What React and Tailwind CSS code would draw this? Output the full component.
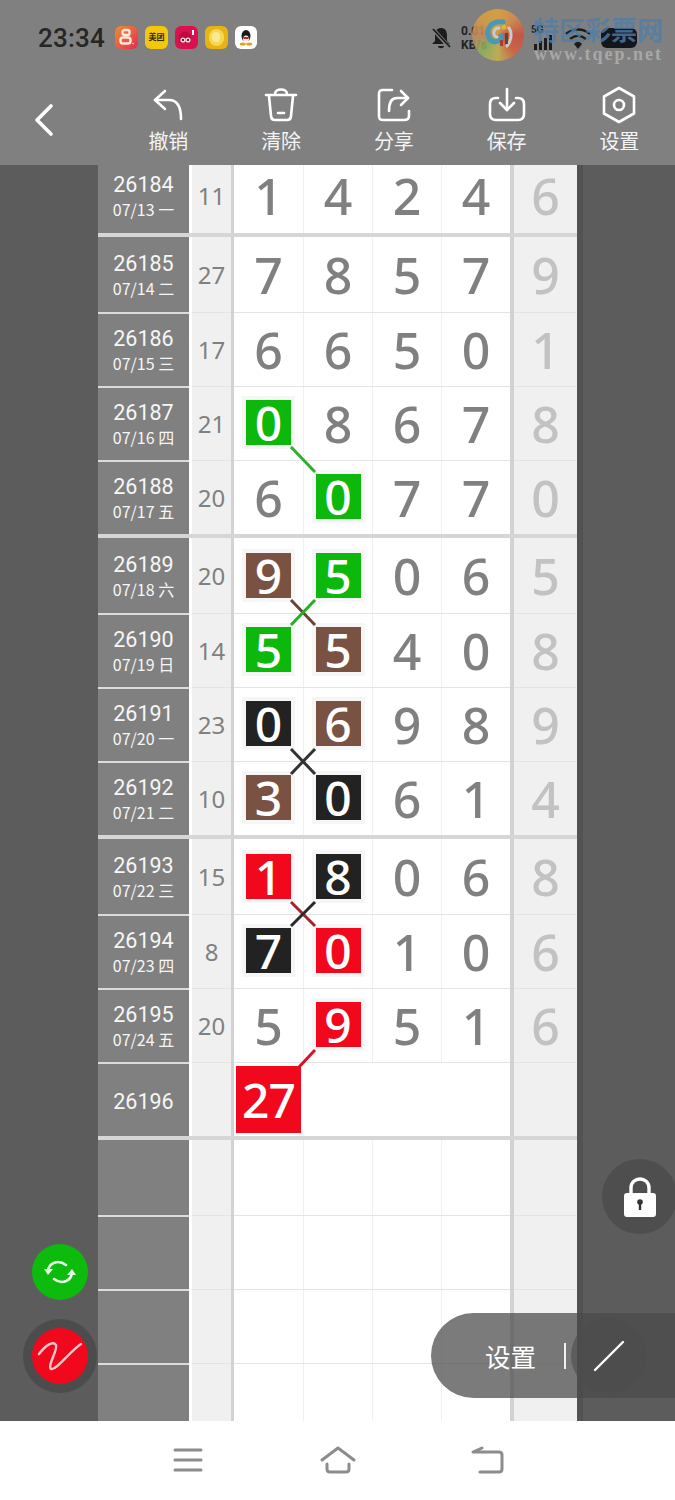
import React from 'react';

const FONT = "font-['Noto_Sans','Noto_Sans_CJK_SC',sans-serif]";

const GREEN = 'bg-[#0cb80c]';
const BROWN = 'bg-[#7a5244]';
const BLACK = 'bg-[#222222]';
const RED = 'bg-[#f2081c]';

const groups = [
  [{ id: '26184', date: '07/13 一', sum: '11', d: '1424', last: '6' }],
  [
    { id: '26185', date: '07/14 二', sum: '27', d: '7857', last: '9' },
    { id: '26186', date: '07/15 三', sum: '17', d: '6650', last: '1' },
    { id: '26187', date: '07/16 四', sum: '21', d: '0867', last: '8', marks: { 0: GREEN } },
    { id: '26188', date: '07/17 五', sum: '20', d: '6077', last: '0', marks: { 1: GREEN } },
  ],
  [
    { id: '26189', date: '07/18 六', sum: '20', d: '9506', last: '5', marks: { 0: BROWN, 1: GREEN } },
    { id: '26190', date: '07/19 日', sum: '14', d: '5540', last: '8', marks: { 0: GREEN, 1: BROWN } },
    { id: '26191', date: '07/20 一', sum: '23', d: '0698', last: '9', marks: { 0: BLACK, 1: BROWN } },
    { id: '26192', date: '07/21 二', sum: '10', d: '3061', last: '4', marks: { 0: BROWN, 1: BLACK } },
  ],
  [
    { id: '26193', date: '07/22 三', sum: '15', d: '1806', last: '8', marks: { 0: RED, 1: BLACK } },
    { id: '26194', date: '07/23 四', sum: '8', d: '7010', last: '6', marks: { 0: BLACK, 1: RED } },
    { id: '26195', date: '07/24 五', sum: '20', d: '5951', last: '6', marks: { 1: RED } },
    { id: '26196', big: '27' },
  ],
  [{}, {}, {}, {}],
];

const lines = [
  [291, 447, 315, 472, '#2fae2f'],
  [291, 600, 315, 625, '#6b4436'],
  [315, 600, 291, 625, '#22b022'],
  [291, 749, 315, 774, '#333333'],
  [315, 749, 291, 774, '#333333'],
  [291, 902, 315, 926, '#a8202c'],
  [315, 902, 291, 926, '#2a2a2a'],
  [315, 1050, 299, 1067, '#e01020'],
];

const ToolIcon = ({ children }) => (
  <svg width="38" height="38" viewBox="0 0 38 38" fill="none" stroke="white" strokeWidth="2.6" strokeLinecap="round" strokeLinejoin="round">
    {children}
  </svg>
);

const tools = [
  {
    label: '撤销',
    icon: (
      <ToolIcon>
        <path d="M16 5 L6 14 L16 23" />
        <path d="M6 14 H20 C28 14 32 21 32 33" />
      </ToolIcon>
    ),
  },
  {
    label: '清除',
    icon: (
      <ToolIcon>
        <path d="M4 9 H34" />
        <path d="M13 8 C13 2 25 2 25 8" />
        <path d="M7 10 L9 30 C9.3 33 11 34 13 34 H25 C27 34 28.7 33 29 30 L31 10" />
        <path d="M16 27 H22" />
      </ToolIcon>
    ),
  },
  {
    label: '分享',
    icon: (
      <ToolIcon>
        <path d="M17 4 H8 C5 4 4 5 4 8 V30 C4 33 5 34 8 34 H29 C32 34 34 33 34 30 V25" />
        <path d="M26 5 L33 12 L26 19" />
        <path d="M33 12 H22 C16 12 14 17 14 25" />
      </ToolIcon>
    ),
  },
  {
    label: '保存',
    icon: (
      <ToolIcon>
        <path d="M10 12 H8 C4 12 2 14 2 18 V28 C2 32 4 34 8 34 H30 C34 34 36 32 36 28 V18 C36 14 34 12 30 12 H28" />
        <path d="M19 3 V24" />
        <path d="M12 17 L19 24 L26 17" />
      </ToolIcon>
    ),
  },
  {
    label: '设置',
    icon: (
      <ToolIcon>
        <path d="M19 2 L34 10.5 V27.5 L19 36 L4 27.5 V10.5 Z" />
        <circle cx="19" cy="19" r="5" />
      </ToolIcon>
    ),
  },
];

const AppIcons = () => (
  <div className="flex items-center gap-[7px] ml-[10px] -mt-[1px]">
    <div className="w-[23px] h-[23px] rounded-[6px] bg-gradient-to-br from-[#ee8a30] to-[#e0204c] flex items-center justify-center">
      <svg width="15" height="18" viewBox="0 0 15 18" fill="none" stroke="#ffe9dc" strokeWidth="2.4">
        <rect x="3.5" y="2" width="7" height="5" rx="2" />
        <rect x="1.5" y="9.5" width="10" height="6" rx="2.5" />
        <circle cx="14" cy="15.5" r="0.8" fill="#ffe9dc" stroke="none" />
      </svg>
    </div>
    <div className="w-[23px] h-[23px] rounded-[6px] bg-[#f4c60c] flex items-center justify-center">
      <span className="text-[8px] leading-none font-bold text-[#2a2a10] font-['Noto_Sans_CJK_SC',sans-serif] whitespace-nowrap">美团</span>
    </div>
    <div className="w-[23px] h-[23px] rounded-[6px] bg-[#d9124f] flex items-center justify-center">
      <svg width="18" height="16" viewBox="0 0 18 16">
        <path d="M2 7 C4 1 12 1 14 7 V14 H2 Z" fill="#c00a40" />
        <circle cx="6" cy="11" r="2.6" fill="#f8d8e0" />
        <circle cx="11" cy="11" r="2.6" fill="#f8d8e0" />
        <circle cx="6" cy="11" r="1.1" fill="#400" />
        <circle cx="11" cy="11" r="1.1" fill="#400" />
        <rect x="15" y="1" width="2" height="5" fill="#fff" />
      </svg>
    </div>
    <div className="w-[23px] h-[23px] rounded-[6px] bg-[#e8b414] flex items-center justify-center">
      <div className="w-[15px] h-[17px] rounded-full bg-[#f6d84e] flex items-center justify-center">
        <div className="w-[8px] h-[10px] rounded-full bg-[#f8e89a]" />
      </div>
    </div>
    <div className="w-[22px] h-[23px] rounded-[6px] bg-white flex items-center justify-center">
      <svg width="14" height="17" viewBox="0 0 14 17">
        <ellipse cx="7" cy="7" rx="4.5" ry="6" fill="#1a1a1a" />
        <ellipse cx="7" cy="10" rx="3" ry="3.6" fill="#f4f4f4" />
        <path d="M3 8 H11 L9 10 H5 Z" fill="#d82020" />
        <ellipse cx="3.8" cy="15" rx="3" ry="1.5" fill="#e8a010" />
        <ellipse cx="10.2" cy="15" rx="3" ry="1.5" fill="#e8a010" />
      </svg>
    </div>
  </div>
);

const StatusBar = () => (
  <div className="relative flex items-center h-[75px] pl-[38px]">
    <span className="text-[26px] leading-none font-medium text-[#262626] font-['Roboto',sans-serif] tracking-[0.2px]">23:34</span>
    <AppIcons />
    {/* status icons under the site watermark */}
    <div className="absolute left-[430px] top-[24px] w-[210px] h-[28px] flex items-center">
      <svg width="22" height="24" viewBox="0 0 22 24" fill="#1c1c1c">
        <path d="M11 2 C6 2 5 6 5 10 V15 L2 18 H20 L17 15 V10 C17 6 16 2 11 2 Z" />
        <path d="M8 20 H14 C14 23 8 23 8 20 Z" />
        <path d="M2 2 L20 22" stroke="#808080" strokeWidth="4" />
        <path d="M3 3 L20 21" stroke="#1c1c1c" strokeWidth="1.8" />
      </svg>
      <div className="ml-[9px] flex flex-col text-[12px] leading-[14px] font-bold text-[#222222] font-['Roboto',sans-serif]">
        <span>0.01</span>
        <span>KB/s</span>
      </div>
      <span className="absolute left-[101px] top-[1px] text-[10px] leading-none font-bold text-[#222222] font-['Roboto',sans-serif]">5G</span>
      <svg className="absolute left-[102px] top-[2px]" width="112" height="26" viewBox="0 0 112 26" fill="#1c1c1c">
        <rect x="2" y="18" width="3" height="6" />
        <rect x="7" y="15" width="3" height="9" />
        <rect x="12" y="12" width="3" height="12" />
        <rect x="17" y="9" width="3" height="15" />
        <path d="M34 8 C41 2 51 2 58 8" fill="none" stroke="#1c1c1c" strokeWidth="2.4" />
        <path d="M38 13 C43 9 49 9 54 13" fill="none" stroke="#1c1c1c" strokeWidth="2.4" />
        <path d="M42 18 C45 15 47 15 50 18 L46 23 Z" />
        <rect x="69" y="2" width="36" height="20" rx="6" fill="#15151c" />
      </svg>
    </div>
    {/* site watermark */}
    <div className="absolute left-[472px] top-[9px] w-[52px] h-[52px] rounded-full opacity-85 bg-[conic-gradient(#e2a43c,#d98c4a,#cf4f3a,#d8603c,#c8b450,#8bb45c,#c98a5a,#d8a040,#e2a43c)] flex items-center justify-center">
      <svg width="38" height="38" viewBox="0 0 38 38" fill="none" strokeLinecap="round">
        <path d="M24 6 C12 4 6 14 10 22 C13 28 22 26 22 20" stroke="#3f9dc0" strokeWidth="5" />
        <path d="M20 12 C14 12 13 20 18 21" stroke="#d8d8d8" strokeWidth="3" />
        <path d="M28 30 C33 24 33 16 30 12" stroke="#d8d8d8" strokeWidth="3" />
        <rect x="26" y="17" width="3" height="11" fill="#444444" />
        <rect x="21" y="24" width="3" height="6" fill="#b03030" />
        <circle cx="25" cy="11" r="2.5" fill="#e8c030" />
      </svg>
    </div>
    <div className="absolute left-[533px] top-[14px] w-[140px] flex flex-col items-start pointer-events-none">
      <span className="text-[26px] leading-[30px] font-bold text-[#4f7ea8]/80 font-['Noto_Sans_CJK_SC',sans-serif] whitespace-nowrap">特区彩票网</span>
      <span className="text-[18px] leading-[20px] font-bold text-[#a8a8a8] font-['Liberation_Serif',serif] tracking-[2px] ml-[1px] whitespace-nowrap">www.tqep.net</span>
    </div>
  </div>
);

const Toolbar = () => (
  <div className="flex items-start h-[90px] relative">
    <svg className="ml-[32px] mt-[27px]" width="24" height="36" viewBox="0 0 24 36" fill="none" stroke="white" strokeWidth="3.6" strokeLinecap="round" strokeLinejoin="round">
      <path d="M19 4 L5 18 L19 32" />
    </svg>
    <div className="absolute left-[112px] top-[11px] flex">
      {tools.map((t) => (
        <div key={t.label} className="w-[112.75px] flex flex-col items-center">
          {t.icon}
          <span className="text-[20px] leading-[24px] mt-[5px] text-[#f4f4f4] font-['Noto_Sans_CJK_SC',sans-serif]">{t.label}</span>
        </div>
      ))}
    </div>
  </div>
);

const Digit = ({ value, mark, index, first }) => {
  const rule = index > 0 ? 'border-l border-[#f0f0f0]' : '';
  if (mark) {
    return (
      <div className={`h-full flex items-center justify-center ${rule}`}>
        <div className={`w-[45px] h-[45px] flex items-center justify-center text-[48px] leading-none font-medium text-white outline-[4px] outline-[#f6f6f6] ${mark} ${first ? '' : 'mb-[2px]'}`}>
          {value}
        </div>
      </div>
    );
  }
  return (
    <div className={`h-full flex items-center justify-center text-[50px] leading-none font-medium text-[#808080] ${rule}`}>
      {value}
    </div>
  );
};

const Row = ({ row, first }) => {
  const height = first ? 'h-[75px]' : 'h-[74px]';
  const d = row.d || '    ';
  return (
    <div className={`grid grid-cols-[91px_3px_39px_3px_69px_69px_69px_69px_4px_63px] ${height}`}>
      <div className={`bg-[#808080] flex flex-col items-center justify-center pt-[2px] text-[#f6f6f6] ${first ? '' : 'border-t-2 border-[#dcdcdc]'}`}>
        {row.id && <span className="text-[21.5px] leading-[25px] font-['Roboto',sans-serif]">{row.id}</span>}
        {row.date && <span className="text-[16px] leading-[25px] font-['Noto_Sans_CJK_SC',sans-serif]">{row.date}</span>}
      </div>
      <div className="bg-white" />
      <div className={`bg-[#f0f0f0] flex items-center justify-center text-[24px] leading-none text-[#808080] ${first ? '' : 'border-t border-[#e4e4e4]'}`}>
        {row.sum}
      </div>
      <div className="bg-[#d2d2d2]" />
      <div className={`col-span-4 grid grid-cols-4 bg-white relative ${first ? '' : 'border-t border-[#e4e4e4]'}`}>
        {row.big ? (
          <div className="flex items-center justify-center">
            <div className="w-[65px] h-[67px] flex items-center justify-center text-[48px] leading-none font-medium tracking-[-1px] text-white bg-[#f2081c]">{row.big}</div>
          </div>
        ) : (
          [0, 1, 2, 3].map((i) => <Digit key={i} index={i} first={first} value={d[i].trim()} mark={row.marks?.[i]} />)
        )}
      </div>
      <div className="bg-[#d2d2d2]" />
      <div className={`bg-[#f0f0f0] flex items-center justify-center text-[50px] leading-none font-medium text-[#c2c2c2] ${first ? '' : 'border-t border-[#e4e4e4]'}`}>
        {row.last}
      </div>
    </div>
  );
};

const Table = () => (
  <div className="w-[479px] shrink-0 h-full overflow-hidden">
    {/* list is scrolled a little, the first row runs under the toolbar */}
    <div className="-mt-[7px]">
      {groups.map((group, gi) => (
        <div key={gi} className={gi > 0 ? 'border-t-4 border-[#d6d6d6]' : ''}>
          {group.map((row, ri) => (
            <Row key={ri} row={row} first={ri === 0} />
          ))}
        </div>
      ))}
    </div>
  </div>
);

const Floating = () => (
  <>
    {/* drawn links between marked numbers */}
    <svg className="absolute left-0 top-0 pointer-events-none" width="675" height="1256" viewBox="0 165 675 1256">
      {lines.map(([x1, y1, x2, y2, c], i) => (
        <line key={i} x1={x1} y1={y1} x2={x2} y2={y2} stroke={c} strokeWidth="3" />
      ))}
    </svg>

    <div className="absolute left-[602px] top-[994px] w-[75px] h-[75px] rounded-full bg-[#4e4e4e] flex items-center justify-center">
      <svg width="36" height="42" viewBox="0 0 36 42">
        <path d="M9 18 V12 C9 0 27 0 27 12 V18" fill="none" stroke="white" strokeWidth="3.4" />
        <rect x="2" y="17" width="32" height="24" rx="3" fill="white" />
        <circle cx="18" cy="26" r="2.8" fill="#333333" />
        <rect x="16.8" y="27" width="2.4" height="7" fill="#333333" />
      </svg>
    </div>

    <div className="absolute left-[32px] top-[1079px] w-[56px] h-[56px] rounded-full bg-[#0dbb0d] flex items-center justify-center">
      <svg width="32" height="32" viewBox="0 0 32 32" fill="none" stroke="#e8ffe8" strokeWidth="2.6" strokeLinecap="round">
        <path d="M4 15 C5 7 14 3 22 9" />
        <path d="M28 17 C27 25 18 29 10 23" />
        <path d="M0 13 H9 L4 19 Z" fill="#e8ffe8" stroke="none" />
        <path d="M32 19 H23 L28 13 Z" fill="#e8ffe8" stroke="none" />
      </svg>
    </div>

    <div className="absolute left-[23px] top-[1154px] w-[74px] h-[74px] rounded-full bg-[#4c4c4c] flex items-center justify-center">
      <div className="w-[56px] h-[56px] rounded-full bg-[#f2081c] flex items-center justify-center">
        <svg width="46" height="36" viewBox="0 0 46 36" fill="none" stroke="#f8c8cc" strokeWidth="2.4" strokeLinecap="round" strokeLinejoin="round">
          <path d="M2 16 C8 8 16 2 19 7 C21 12 10 28 14 31 C19 33 32 14 44 6" />
        </svg>
      </div>
    </div>

    <div className="absolute left-[431px] top-[1148px] w-[244px] h-[85px] rounded-l-[43px] bg-[rgba(74,74,74,0.73)] flex items-center">
      <span className="ml-[54px] text-[25.5px] leading-none text-white font-['Noto_Sans_CJK_SC',sans-serif]">设置</span>
      <div className="ml-[28px] w-[2px] h-[26px] bg-[#f0f0f0]" />
      <div className="absolute left-[140px] top-[5px] w-[75px] h-[75px] rounded-full bg-[#4c4c4c]/60 flex items-center justify-center">
        <svg width="32" height="32" viewBox="0 0 32 32" stroke="white" strokeWidth="2.4" strokeLinecap="round">
          <path d="M2 30 L30 2" />
        </svg>
      </div>
    </div>
  </>
);

const BottomNav = () => (
  <div className="h-[79px] bg-white flex items-center">
    <svg className="ml-[173px] -mt-[1px]" width="30" height="26" viewBox="0 0 30 26" fill="none" stroke="#8c8c8c" strokeWidth="3" strokeLinecap="round">
      <path d="M2 3 H28 M2 13 H28 M2 23 H28" />
    </svg>
    <svg className="ml-[116px] -mt-[1px]" width="38" height="30" viewBox="0 0 38 30" fill="none" stroke="#8c8c8c" strokeWidth="3" strokeLinecap="round" strokeLinejoin="round">
      <path d="M3 15 L19 3 L35 15" />
      <path d="M8 19 V24 C8 26 9 27 11 27 H27 C29 27 30 26 30 24 V19" />
    </svg>
    <svg className="ml-[114px] -mt-[1px]" width="34" height="30" viewBox="0 0 34 30" fill="none" stroke="#8c8c8c" strokeWidth="3" strokeLinecap="round" strokeLinejoin="round">
      <path d="M11 3 L2 7 H28 C30 7 31 8 31 10 V24 C31 26 30 27 28 27 H9" />
    </svg>
  </div>
);

export default function App() {
  return (
    <div className={`w-[675px] h-[1500px] overflow-hidden bg-white ${FONT}`}>
      <div className="h-[165px] bg-[#808080]">
        <StatusBar />
        <Toolbar />
      </div>
      <div className="relative flex h-[1256px] bg-[#5c5c5c] overflow-hidden">
        <div className="w-[98px] shrink-0" />
        <Table />
        <div className="w-[6px] bg-[#525252]" />
        <Floating />
      </div>
      <BottomNav />
    </div>
  );
}
